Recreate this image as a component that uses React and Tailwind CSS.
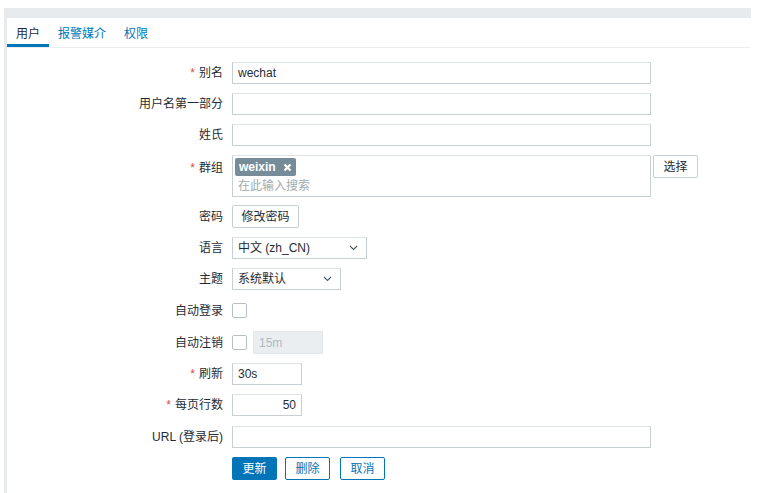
import { useState } from 'react';

const font = { fontFamily: '"Liberation Sans", "Noto Sans CJK SC", Arial, sans-serif' };

const Req = () => <span className="text-[#d64e4e] mr-[4px]">*</span>;

const Label = ({ children, required, top }) => (
  <div
    className={`w-[225px] shrink-0 pr-[9px] text-right text-[#1f2c33] ${
      top ? 'pt-[4px] self-start' : ''
    }`}
  >
    {required && <Req />}
    {children}
  </div>
);

const Chevron = () => (
  <svg width="9" height="6" viewBox="0 0 9 6" className="shrink-0">
    <path d="M1 1l3.5 3.5L8 1" fill="none" stroke="#4b5a62" strokeWidth="1.1" />
  </svg>
);

const inputCls =
  'h-[22px] border border-[#c5cfd4] border-t-[#dde3e6] bg-white px-[5px] text-[12px] text-[#1f2c33] outline-none';

export default function App() {
  const [tab] = useState(0);
  const tabs = ['用户', '报警媒介', '权限'];

  return (
    <div className="w-[761px] h-[493px] bg-white overflow-hidden pt-[8px] pl-[4px] text-[12px]" style={font}>
      <div className="w-[747px] h-[485px] bg-[#e8ebee] pt-[10px] pl-[3px]">
        <div className="h-full bg-white">
          {/* tabs */}
          <div className="flex h-[30px] border-b border-[#ebeef0]">
            {tabs.map((t, i) => (
              <div
                key={t}
                className={`px-[9px] pt-[7px] border-b-[3px] ${
                  i === tab ? 'border-[#0275b8] text-[#1f2c33]' : 'border-transparent text-[#0275b8]'
                }`}
              >
                {t}
              </div>
            ))}
          </div>

          {/* form */}
          <div className="flex flex-col gap-[9px] pt-[14px]">
            <div className="flex items-center h-[22px]">
              <Label required>别名</Label>
              <input className={`${inputCls} w-[419px]`} defaultValue="wechat" />
            </div>
            <div className="flex items-center h-[22px]">
              <Label>用户名第一部分</Label>
              <input className={`${inputCls} w-[419px]`} />
            </div>
            <div className="flex items-center h-[22px]">
              <Label>姓氏</Label>
              <input className={`${inputCls} w-[419px]`} />
            </div>
            <div className="flex h-[41px]">
              <Label required top>群组</Label>
              <div className="w-[419px] h-[42px] border border-[#c5cfd4] border-t-[#dde3e6] px-[2px] pt-[2px]">
                <span className="inline-flex items-center h-[18px] bg-[#768d99] text-white font-bold px-[4px] gap-[7px] rounded-[2px]">
                  weixin
                  <svg width="9" height="9" viewBox="0 0 9 9">
                    <path d="M1.5 1.5l6 6M7.5 1.5l-6 6" stroke="white" strokeWidth="2.2" />
                  </svg>
                </span>
                <div className="pl-[3px] mt-[1px] text-[#a0abb1]">在此输入搜索</div>
              </div>
              <button className="ml-[2px] self-start w-[45px] h-[23px] border border-[#c5cfd4] rounded-[2px] bg-white text-[#1f2c33]">
                选择
              </button>
            </div>
            <div className="flex items-center h-[23px]">
              <Label>密码</Label>
              <button className="w-[67px] h-[23px] border border-[#c5cfd4] rounded-[2px] bg-white text-[#1f2c33]">
                修改密码
              </button>
            </div>
            <div className="flex items-center h-[22px]">
              <Label>语言</Label>
              <div className={`${inputCls} w-[135px] flex items-center justify-between pr-[8px]`}>
                <span>中文 (zh_CN)</span>
                <Chevron />
              </div>
            </div>
            <div className="flex items-center h-[22px]">
              <Label>主题</Label>
              <div className={`${inputCls} w-[109px] flex items-center justify-between pr-[8px]`}>
                <span>系统默认</span>
                <Chevron />
              </div>
            </div>
            <div className="flex items-center h-[23px]">
              <Label>自动登录</Label>
              <div className="w-[15px] h-[15px] border border-[#b4c0c6] rounded-[2px] bg-white" />
            </div>
            <div className="flex items-center h-[23px]">
              <Label>自动注销</Label>
              <div className="w-[15px] h-[15px] border border-[#b4c0c6] rounded-[2px] bg-white" />
              <div className="ml-[6px] w-[70px] h-[23px] border border-[#e4e8ea] bg-[#ebeef0] px-[5px] flex items-center text-[#acbbc2]">
                15m
              </div>
            </div>
            <div className="flex items-center h-[22px]">
              <Label required>刷新</Label>
              <input className={`${inputCls} w-[70px]`} defaultValue="30s" />
            </div>
            <div className="flex items-center h-[22px]">
              <Label required>每页行数</Label>
              <input className={`${inputCls} w-[70px] text-right`} defaultValue="50" />
            </div>
            <div className="flex items-center h-[23px]">
              <Label>URL (登录后)</Label>
              <input className={`${inputCls} w-[419px]`} />
            </div>
            <div className="flex items-center h-[23px] pl-[225px] gap-[8px]">
              <button className="w-[45px] h-[23px] rounded-[2px] bg-[#0275b8] text-white">更新</button>
              <button className="w-[45px] h-[23px] rounded-[2px] border border-[#0275b8] bg-white text-[#0275b8]">
                删除
              </button>
              <button className="ml-[2px] w-[45px] h-[23px] rounded-[2px] border border-[#0275b8] bg-white text-[#0275b8]">
                取消
              </button>
            </div>
          </div>
        </div>
      </div>
    </div>
  );
}
